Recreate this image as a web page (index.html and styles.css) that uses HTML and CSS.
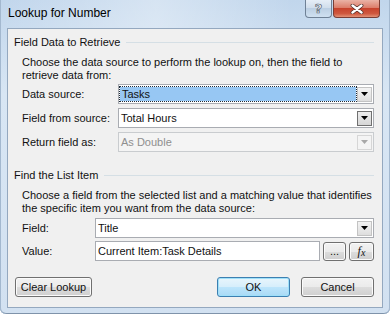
FILE: index.html
```html
<!DOCTYPE html>
<html lang="en">
<head>
    <meta charset="UTF-8">
    <title>Lookup for Number</title>
    <link rel="stylesheet" href="styles.css">
</head>
<body>
    <div class="window">
        <div class="titlebar">
            <span class="title">Lookup for Number</span>
            <div class="caption-buttons">
                <button class="cap help">?</button>
                <button class="cap close">
                    <svg width="14" height="10" viewBox="0 0 14 10">
                        <path d="M2.5 1.5 L11.5 8.5 M11.5 1.5 L2.5 8.5" stroke="#4a2a25" stroke-width="3.8" stroke-linecap="round"/>
                        <path d="M2.5 1.5 L11.5 8.5 M11.5 1.5 L2.5 8.5" stroke="#fff" stroke-width="2.4" stroke-linecap="round"/>
                    </svg>
                </button>
            </div>
        </div>

        <div class="client">
            <!-- Field data -->
            <div class="group-head">
                <span>Field Data to Retrieve</span>
                <span class="rule"></span>
            </div>
            <p class="desc">Choose the data source to perform the lookup on, then the field to<br>retrieve data from:</p>

            <div class="row first">
                <label class="lbl wide">Data source:</label>
                <div class="combo">
                    <span class="value selected">Tasks</span>
                    <span class="arrow">
                        <svg width="7" height="4" viewBox="0 0 7 4"><polygon points="0,0 7,0 3.5,4" fill="#000"/></svg>
                    </span>
                </div>
            </div>
            <div class="row">
                <label class="lbl wide">Field from source:</label>
                <div class="combo">
                    <span class="value">Total Hours</span>
                    <span class="arrow hot">
                        <svg width="7" height="4" viewBox="0 0 7 4"><polygon points="0,0 7,0 3.5,4" fill="#000"/></svg>
                    </span>
                </div>
            </div>
            <div class="row">
                <label class="lbl wide">Return field as:</label>
                <div class="combo disabled">
                    <span class="value">As Double</span>
                    <span class="arrow">
                        <svg width="7" height="4" viewBox="0 0 7 4"><polygon points="0,0 7,0 3.5,4" fill="#a8a8a8"/></svg>
                    </span>
                </div>
            </div>

            <!-- List item -->
            <div class="group-head second">
                <span>Find the List Item</span>
                <span class="rule"></span>
            </div>
            <p class="desc">Choose a field from the selected list and a matching value that identifies<br>the specific item you want from the data source:</p>

            <div class="row tight">
                <label class="lbl">Field:</label>
                <div class="combo">
                    <span class="value">Title</span>
                    <span class="arrow">
                        <svg width="7" height="4" viewBox="0 0 7 4"><polygon points="0,0 7,0 3.5,4" fill="#000"/></svg>
                    </span>
                </div>
            </div>
            <div class="row tight">
                <label class="lbl">Value:</label>
                <div class="combo">
                    <span class="value">Current Item:Task Details</span>
                </div>
                <button class="btn small">...</button>
                <button class="btn small fx"><i>f</i><i class="x">x</i></button>
            </div>

            <div class="actions">
                <button class="btn clear">Clear Lookup</button>
                <button class="btn default">OK</button>
                <button class="btn">Cancel</button>
            </div>
        </div>
    </div>
</body>
</html>
```

FILE: styles.css
```css
body {
    margin: 0;
    background: #fff;
    font-family: "Liberation Sans", Arial, sans-serif;
    font-size: 11px;
    color: #111;
}

.window {
    width: 390px;
    height: 314px;
    box-sizing: border-box;
    background: linear-gradient(to bottom, #c1d6ec, #d8e6f4 30%, #d2e1f1 100%);
    border-radius: 0 0 6px 6px;
    box-shadow: inset 1px 0 #a3b8cf, inset -1px 0 #a3b8cf, inset 0 -1px #7f93aa;
    overflow: hidden;
}

.titlebar {
    height: 28px;
    display: flex;
    align-items: flex-start;
    padding: 0 10px 0 8px;
    background: linear-gradient(to right, rgba(255, 255, 255, 0) 0%, rgba(255, 255, 255, 0.35) 40%, rgba(255, 255, 255, 0) 75%);
}

.title {
    font-size: 12px;
    line-height: 14px;
    margin-top: 6px;
    color: #000;
}

.caption-buttons {
    margin-left: auto;
    display: flex;
    gap: 1px;
}

.cap {
    height: 18px;
    padding: 0;
    border: 1px solid #6f8196;
    border-top: none;
    border-radius: 0 0 4px 4px;
    display: flex;
    align-items: center;
    justify-content: center;
}

.help {
    width: 27px;
    background: linear-gradient(to bottom, #e6eef7, #cfdcea 50%, #bccfe3 50%, #cfe0f0);
    font-family: "DejaVu Sans", sans-serif;
    font-size: 13px;
    font-weight: bold;
    color: #eef3f8;
    -webkit-text-stroke: 0.7px #5b6470;
}

.close {
    width: 47px;
    border-color: #7a3d35;
    background: linear-gradient(to bottom, #eab3a6, #dc7e6b 45%, #c7432d 50%, #cf583f 80%, #e39176);
}

.client {
    margin: 0 7px;
    height: 280px;
    box-sizing: border-box;
    border: 1px solid #94a8bf;
    background: #f0f0f0;
    padding-right: 8px;
}

.group-head {
    display: flex;
    align-items: center;
    height: 14px;
    margin-top: 6px;
    padding-left: 6px;
}

.group-head.second {
    margin-top: 16px;
}

.rule {
    flex: 1;
    border-top: 1px solid #d5dfe5;
    margin-left: 6px;
}

.desc {
    margin: 7px 0 0 14px;
    line-height: 13px;
}

.row {
    display: flex;
    align-items: center;
    height: 20px;
    margin-top: 4px;
    padding-left: 14px;
}

.row.first {
    margin-top: 2px;
}

.row.tight {
    margin-top: 3px;
}

.lbl {
    width: 73px;
    flex: none;
}

.lbl.wide {
    width: 96px;
}

.combo {
    flex: 1;
    height: 20px;
    box-sizing: border-box;
    border: 1px solid #a9acb2;
    background: #fff;
    display: flex;
    align-items: center;
}

.value {
    flex: 1;
    padding-left: 2px;
    line-height: 16px;
    white-space: nowrap;
}

.value.selected {
    height: 14px;
    line-height: 14px;
    margin: 0 1px;
    background: #97c7f3;
    outline: 1px dotted #1d2a38;
}

.arrow {
    width: 15px;
    height: 15px;
    margin-right: 1px;
    box-sizing: border-box;
    border: 1px solid #c3c3c3;
    background: linear-gradient(to bottom, #f3f3f3, #dedede);
    display: flex;
    align-items: center;
    justify-content: center;
}

.arrow.hot {
    border-color: #707070;
    background: linear-gradient(to bottom, #ededed, #d6d6d6);
}

.combo.disabled {
    background: #f4f4f4;
    border-color: #c9cccf;
    color: #8f8f8f;
}

.combo.disabled .arrow {
    border-color: #d6d6d6;
    background: #f4f4f4;
}

.btn {
    height: 20px;
    box-sizing: border-box;
    padding: 0;
    border: 1px solid #707070;
    border-radius: 3px;
    background: linear-gradient(to bottom, #f2f2f2, #ebebeb 50%, #dddddd 50%, #cfcfcf);
    box-shadow: inset 0 0 0 1px #fbfbfb;
    font-family: inherit;
    font-size: 11px;
    color: #111;
    width: 73px;
}

.btn.small {
    width: 23px;
    height: 19px;
    margin-left: 3px;
    line-height: 12px;
}

.btn.fx {
    width: 25px;
    font-family: "Liberation Serif", serif;
    font-size: 12px;
}

.fx .x {
    font-size: 10px;
    position: relative;
    top: 1px;
}

.actions {
    display: flex;
    gap: 11px;
    margin-top: 16px;
    padding-left: 7px;
}

.btn.clear {
    width: 77px;
    margin-right: auto;
}

.btn.default {
    border-color: #3c7fb1;
    background: linear-gradient(to bottom, #e8f5fc, #d6eefb 50%, #bde5fb 50%, #a9daf6);
    box-shadow: inset 0 0 0 1px #9fe0f9;
}
```
